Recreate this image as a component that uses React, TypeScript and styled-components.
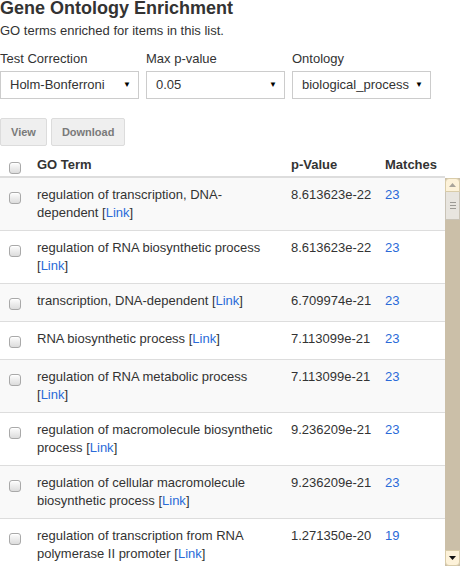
import React from "react";
import styled, { createGlobalStyle } from "styled-components";

const GlobalStyle = createGlobalStyle`
  html, body { margin: 0; padding: 0; background: #fff; }
  body {
    font-family: "Liberation Sans", Arial, sans-serif;
    font-size: 13px;
    color: #333;
    width: 460px;
    height: 566px;
    overflow: hidden;
  }
  * { box-sizing: border-box; }
`;

const Page = styled.div`
  width: 460px;
  height: 566px;
  display: flex;
  flex-direction: column;
`;

const Title = styled.h2`
  margin: 0 0 6px;
  font-size: 18px;
  line-height: 16px;
  font-weight: bold;
  color: #333;
`;

const Subtitle = styled.p`
  margin: 0;
  line-height: 18px;
`;

const Controls = styled.div`
  display: flex;
  gap: 7px;
  margin-top: 10px;
`;

const Field = styled.div`
  width: 139px;
  display: flex;
  flex-direction: column;
  gap: 3px;
`;

const Label = styled.label`
  line-height: 18px;
`;

const Select = styled.div`
  height: 28px;
  border: 1px solid #ccc;
  background: #fff;
  display: flex;
  align-items: center;
  justify-content: space-between;
  padding: 0 7px 0 9px;
  line-height: 18px;
`;

const Caret = styled.span`
  font-size: 8px;
  color: #000;
  line-height: 1;
`;

const Buttons = styled.div`
  display: flex;
  gap: 4px;
  margin-top: 19px;
`;

const Button = styled.button`
  height: 28px;
  padding: 0 10px;
  border: 1px solid #dcdcdc;
  border-radius: 2px;
  background: #efefef;
  color: #7a7a7a;
  font-family: "Liberation Sans", Arial, sans-serif;
  font-size: 11px;
  font-weight: bold;
`;

const grid = `
  display: grid;
  grid-template-columns: 29px 254px 94px 1fr;
`;

const HeaderRow = styled.div`
  ${grid}
  margin-top: 5px;
  padding: 5px 0 0;
  border-bottom: 2px solid #ddd;
  font-weight: bold;
  line-height: 18px;
  width: 445px;
`;

const HeaderCell = styled.div`
  padding: 0 0 2px 8px;
`;

const CheckCell = styled.div<{ $head?: boolean }>`
  padding: ${(p) => (p.$head ? "0 0 2px 8px" : "8px 0 8px 8px")};
`;

const Check = styled.span<{ $head?: boolean }>`
  display: block;
  width: 12px;
  height: 12px;
  margin: ${(p) => (p.$head ? "6px 0 0 1px" : "6px 0 3px 1px")};
  border: 1px solid #a9a9a9;
  border-radius: 3px;
  background: linear-gradient(#fdfdfd, #dcdcdc);
  box-shadow: inset 0 1px 0 #fff;
`;

const ListArea = styled.div`
  flex: 1;
  display: flex;
  min-height: 0;
`;

const List = styled.div`
  flex: 1;
  overflow: hidden;
`;

const Row = styled.div<{ $striped: boolean }>`
  ${grid}
  border-bottom: 1px solid #ddd;
  background: ${(p) => (p.$striped ? "#f9f9f9" : "#fff")};
  line-height: 18px;
`;

const Cell = styled.div<{ $nowrap?: boolean }>`
  padding: 8px;
  white-space: ${(p) => (p.$nowrap ? "nowrap" : "normal")};
`;

const Link = styled.a`
  color: #2a6ad8;
  text-decoration: none;
`;

const ScrollBar = styled.div`
  width: 15px;
  display: flex;
  flex-direction: column;
  background: #cbbfa8;
`;

const ArrowBtn = styled.div<{ $pos: "top" | "bottom" }>`
  height: ${(p) => (p.$pos === "top" ? "14px" : "16px")};
  background: #fdf2d9;
  border: 1px solid #d9cca9;
  border-radius: ${(p) => (p.$pos === "top" ? "4px 4px 0 0" : "0 0 4px 4px")};
  display: flex;
  align-items: center;
  justify-content: center;
`;

const Thumb = styled.div`
  height: 28px;
  background: #e8e5df;
  border: 1px solid #c9c3b6;
  border-top: none;
  display: flex;
  flex-direction: column;
  align-items: center;
  justify-content: center;
  gap: 2px;
`;

const Grip = styled.span`
  width: 6px;
  height: 1px;
  background: #9c9a95;
`;

const Track = styled.div`
  flex: 1;
`;

type Term = { name: string; p: string; n: number };

const terms: Term[] = [
  { name: "regulation of transcription, DNA-dependent", p: "8.613623e-22", n: 23 },
  { name: "regulation of RNA biosynthetic process", p: "8.613623e-22", n: 23 },
  { name: "transcription, DNA-dependent", p: "6.709974e-21", n: 23 },
  { name: "RNA biosynthetic process", p: "7.113099e-21", n: 23 },
  { name: "regulation of RNA metabolic process", p: "7.113099e-21", n: 23 },
  { name: "regulation of macromolecule biosynthetic process", p: "9.236209e-21", n: 23 },
  { name: "regulation of cellular macromolecule biosynthetic process", p: "9.236209e-21", n: 23 },
  { name: "regulation of transcription from RNA polymerase II promoter", p: "1.271350e-20", n: 19 },
  { name: "regulation of gene expression", p: "2.109884e-20", n: 23 },
  { name: "regulation of cellular biosynthetic process", p: "3.562918e-20", n: 23 },
];

const Triangle = ({ up, color }: { up: boolean; color: string }) => (
  <svg width="7" height="4" viewBox="0 0 7 4">
    <polygon points={up ? "0,4 7,4 3.5,0" : "0,0 7,0 3.5,4"} fill={color} />
  </svg>
);

export default function App() {
  return (
    <Page>
      <GlobalStyle />
      <Title>Gene Ontology Enrichment</Title>
      <Subtitle>GO terms enriched for items in this list.</Subtitle>
      <Controls>
        <Field>
          <Label>Test Correction</Label>
          <Select>
            <span>Holm-Bonferroni</span>
            <Caret>▼</Caret>
          </Select>
        </Field>
        <Field>
          <Label>Max p-value</Label>
          <Select>
            <span>0.05</span>
            <Caret>▼</Caret>
          </Select>
        </Field>
        <Field>
          <Label>Ontology</Label>
          <Select>
            <span>biological_process</span>
            <Caret>▼</Caret>
          </Select>
        </Field>
      </Controls>
      <Buttons>
        <Button>View</Button>
        <Button>Download</Button>
      </Buttons>
      <HeaderRow>
        <CheckCell $head>
          <Check $head />
        </CheckCell>
        <HeaderCell>GO Term</HeaderCell>
        <HeaderCell>p-Value</HeaderCell>
        <HeaderCell>Matches</HeaderCell>
      </HeaderRow>
      <ListArea>
        <List>
          {terms.map((t, i) => (
            <Row key={t.name} $striped={i % 2 === 0}>
              <CheckCell>
                <Check />
              </CheckCell>
              <Cell>
                {t.name} [<Link href="#">Link</Link>]
              </Cell>
              <Cell $nowrap>{t.p}</Cell>
              <Cell>
                <Link href="#">{t.n}</Link>
              </Cell>
            </Row>
          ))}
        </List>
        <ScrollBar>
          <ArrowBtn $pos="top">
            <Triangle up color="#a9a49a" />
          </ArrowBtn>
          <Thumb>
            <Grip />
            <Grip />
            <Grip />
          </Thumb>
          <Track />
          <ArrowBtn $pos="bottom">
            <Triangle up={false} color="#111" />
          </ArrowBtn>
        </ScrollBar>
      </ListArea>
    </Page>
  );
}
